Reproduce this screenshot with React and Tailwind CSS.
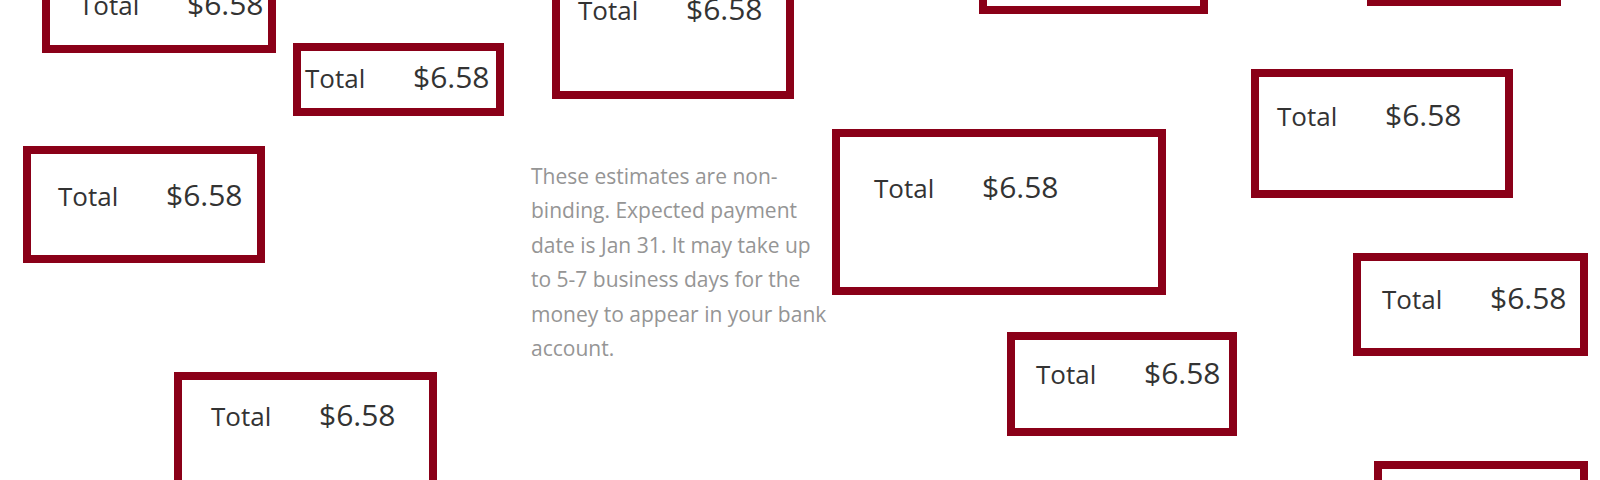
import React from 'react';

// scattered "Total" cards: box position/size, then where the text row starts (tx) and its middle (ty)
const boxes = [
  { x: 42, y: -48, w: 234, h: 101, tx: 79, ty: 4 },
  { x: 293, y: 43, w: 211, h: 73, tx: 305, ty: 77 },
  { x: 23, y: 146, w: 242, h: 117, tx: 58, ty: 195 },
  { x: 552, y: -70, w: 242, h: 169, tx: 578, ty: 9 },
  { x: 979, y: -90, w: 229, h: 104, tx: null },
  { x: 1367, y: -90, w: 194, h: 96, tx: null },
  { x: 832, y: 129, w: 334, h: 166, tx: 874, ty: 187 },
  { x: 1251, y: 69, w: 262, h: 129, tx: 1277, ty: 115 },
  { x: 1353, y: 253, w: 235, h: 103, tx: 1382, ty: 298 },
  { x: 1007, y: 332, w: 230, h: 104, tx: 1036, ty: 373 },
  { x: 174, y: 372, w: 263, h: 140, tx: 211, ty: 415 },
  { x: 1374, y: 461, w: 214, h: 100, tx: null },
];

function TotalBox({ b }) {
  return (
    <div
      className="absolute box-border border-[8px] border-[#8a0018] bg-white"
      style={{ left: b.x, top: b.y, width: b.w, height: b.h }}
    >
      {b.tx !== null && (
        <div
          className="absolute flex items-baseline h-[40px] leading-[40px] whitespace-nowrap text-[#333]"
          style={{ left: b.tx - b.x - 8, top: b.ty - b.y - 8 - 20 }}
        >
          <span className="w-[108px] text-[26px]">Total</span>
          <span className="text-[30px] font-medium">$6.58</span>
        </div>
      )}
    </div>
  );
}

export default function App() {
  return (
    <main
      className="relative w-[1600px] h-[480px] overflow-hidden bg-white"
      style={{ fontFamily: '"Open Sans", "Noto Sans", sans-serif' }}
    >
      {boxes.map((b, i) => (
        <TotalBox key={i} b={b} />
      ))}
      <p className="absolute left-[531px] top-[159px] w-[298px] text-[21px] leading-[34.4px] text-[#959595]">
        These estimates are non-binding. Expected payment date is Jan 31. It may take up to 5-7 business days for the money to appear in your bank account.
      </p>
    </main>
  );
}
